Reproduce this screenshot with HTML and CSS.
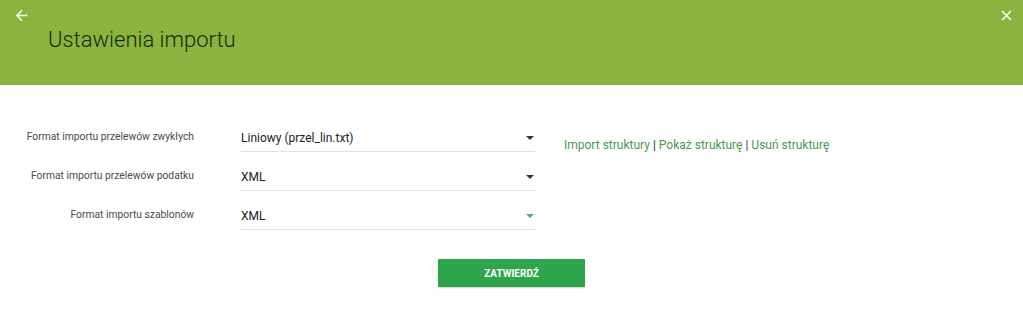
FILE: index.html
```html
<!DOCTYPE html>
<html lang="pl">
<head>
<meta charset="utf-8">
<link rel="stylesheet" href="styles.css">
</head>
<body>
<header class="header">
  <div class="header-top">
    <svg class="icon back" viewBox="0 0 24 24" width="17" height="17"><path d="M20 11H7.83l5.59-5.59L12 4l-8 8 8 8 1.41-1.41L7.83 13H20v-2z" fill="#fff"/></svg>
    <svg class="icon close" viewBox="0 0 24 24" width="17" height="17"><path d="M19 6.41L17.59 5 12 10.59 6.41 5 5 6.41 10.59 12 5 17.59 6.41 19 12 13.41 17.59 19 19 17.59 13.41 12z" fill="#fff"/></svg>
  </div>
  <h1 class="title">Ustawienia importu</h1>
</header>
<main class="content">
  <div class="form">
    <div class="fields">
      <div class="row">
        <label class="label">Format importu przelewów zwykłych</label>
        <div class="select"><span>Liniowy (przel_lin.txt)</span><span class="caret"></span></div>
      </div>
      <div class="row">
        <label class="label">Format importu przelewów podatku</label>
        <div class="select"><span>XML</span><span class="caret"></span></div>
      </div>
      <div class="row">
        <label class="label">Format importu szablonów</label>
        <div class="select"><span>XML</span><span class="caret green"></span></div>
      </div>
    </div>
    <div class="links">
      <a href="#">Import struktury</a> <span class="sep">|</span> <a href="#">Pokaż strukturę</a> <span class="sep">|</span> <a href="#">Usuń strukturę</a>
    </div>
  </div>
  <div class="actions">
    <button class="btn">ZATWIERDŹ</button>
  </div>
</main>
</body>
</html>
```
FILE: styles.css
```css
* { box-sizing: border-box; }
html, body { margin: 0; padding: 0; }
body {
  font-family: Roboto, "Noto Sans", sans-serif;
  background: #fff;
  width: 1023px;
  height: 315px;
  overflow: hidden;
}
.header {
  background: #8ab43d;
  height: 85px;
  padding: 0;
}
.header-top {
  display: flex;
  justify-content: space-between;
  align-items: center;
  padding: 7px 8px 0 13px;
  height: 24px;
}
.icon { display: block; }
.title {
  margin: 2px 0 0 48px;
  font-size: 22px;
  font-weight: 300;
  color: #1a2810;
  line-height: 28px;
}
.content {
  padding-top: 37px;
}
.form {
  display: flex;
  align-items: flex-start;
}
.fields {
  display: flex;
  flex-direction: column;
}
.row {
  display: flex;
  align-items: flex-start;
  height: 39px;
}
.label {
  width: 194px;
  text-align: right;
  font-size: 10.3px;
  color: #4a4a4a;
  padding-top: 8px;
}
.select {
  margin-left: 47px;
  width: 294px;
  height: 30px;
  border-bottom: 1px solid #e2e2e2;
  display: flex;
  justify-content: space-between;
  align-items: center;
  font-size: 12px;
  color: #222;
  padding-top: 3px;
  padding-right: 1px;
}
.caret {
  width: 0; height: 0;
  border-left: 4px solid transparent;
  border-right: 4px solid transparent;
  border-top: 4px solid #333;
}
.caret.green { border-top-color: #4caf6a; }
.links {
  margin-left: 29px;
  padding-top: 16px;
  font-size: 12px;
  color: #333;
}
.links a {
  color: #3f9c4f;
  text-decoration: none;
}
.actions {
  display: flex;
  padding-left: 438px;
  padding-top: 20px;
}
.btn {
  width: 147px;
  height: 28px;
  background: #2ea44b;
  color: #fff;
  border: none;
  border-radius: 1px;
  font-family: Roboto, sans-serif;
  font-weight: 700;
  font-size: 10px;
  box-shadow: 0 1px 2px rgba(0,0,0,0.2);
}
```
